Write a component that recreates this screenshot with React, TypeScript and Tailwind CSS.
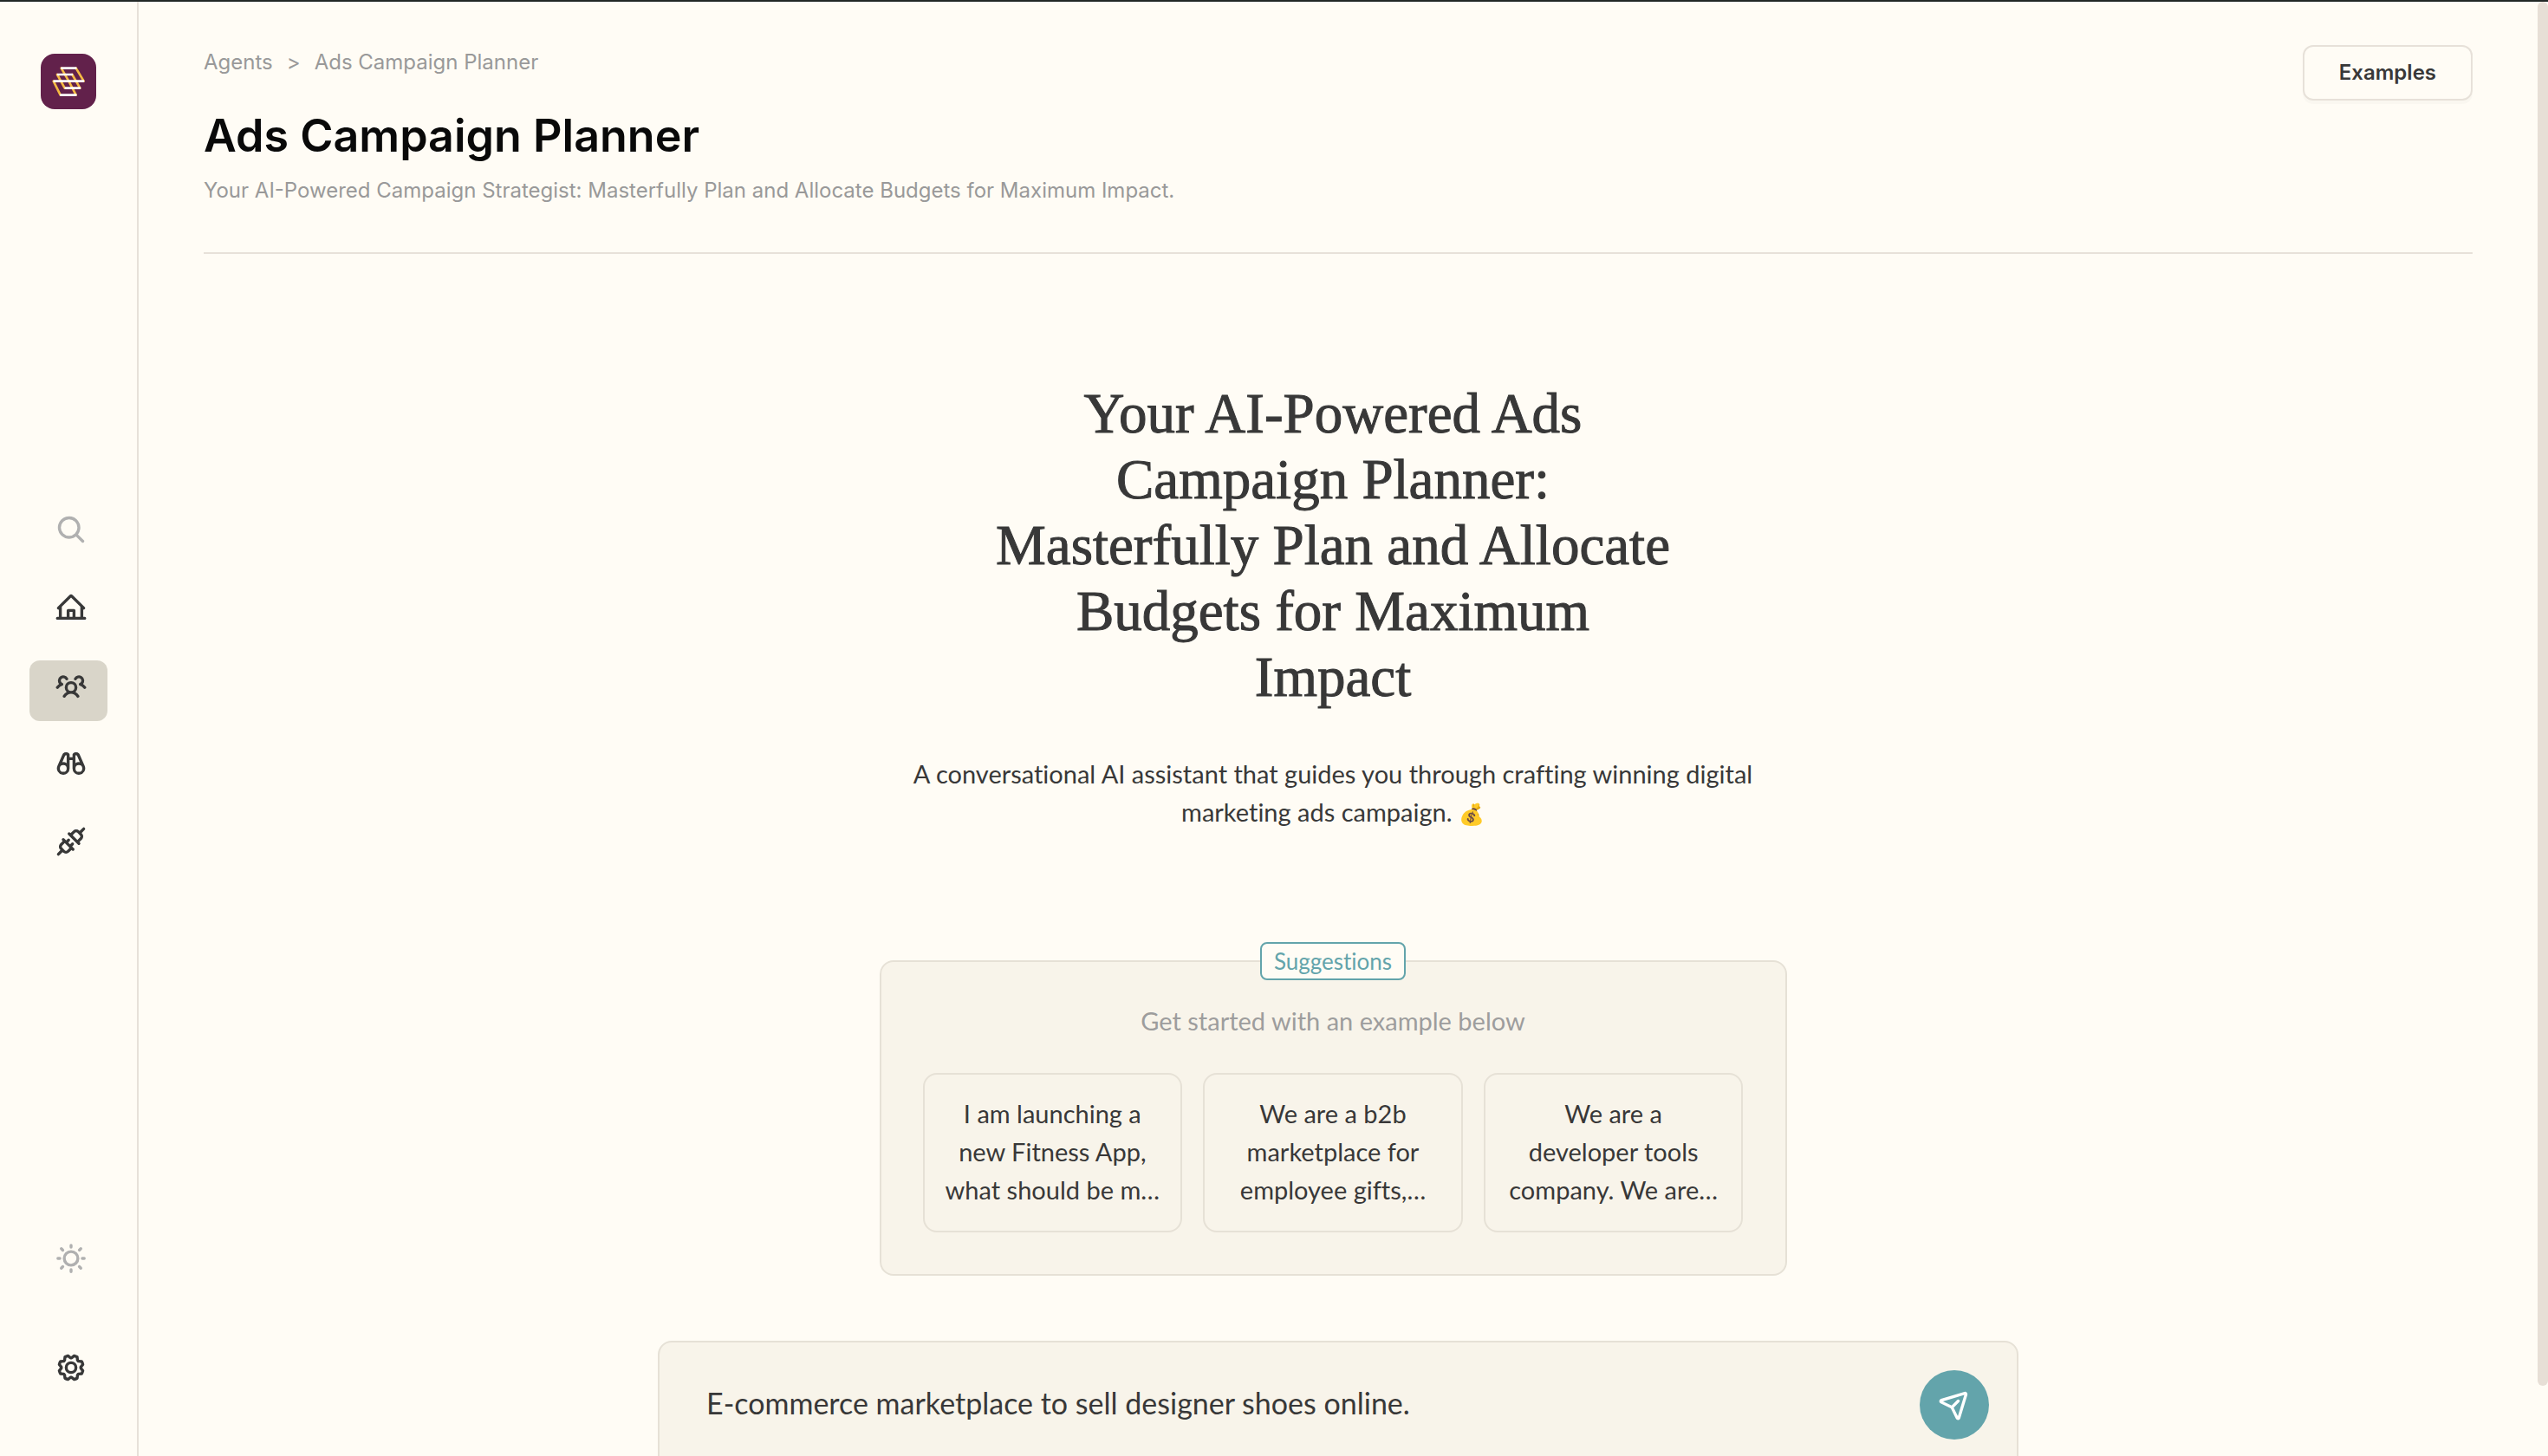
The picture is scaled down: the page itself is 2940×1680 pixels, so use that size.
import {
  PiBinocularsBold,
  PiGearBold,
  PiHouseLineBold,
  PiMagnifyingGlassBold,
  PiPaperPlaneTiltBold,
  PiPlugsBold,
  PiSunBold,
  PiUsersThreeBold,
} from 'react-icons/pi'
import type { IconType } from 'react-icons'

interface NavItem {
  label: string
  icon: IconType
  active?: boolean
  muted?: boolean
}

const NAV_ITEMS: NavItem[] = [
  { label: 'Search', icon: PiMagnifyingGlassBold, muted: true },
  { label: 'Home', icon: PiHouseLineBold },
  { label: 'Agents', icon: PiUsersThreeBold, active: true },
  { label: 'Explore', icon: PiBinocularsBold },
  { label: 'Integrations', icon: PiPlugsBold },
]

const HEADLINE = [
  'Your AI-Powered Ads',
  'Campaign Planner:',
  'Masterfully Plan and Allocate',
  'Budgets for Maximum',
  'Impact',
]

const SUGGESTIONS = [
  'I am launching a\nnew Fitness App,\nwhat should be m…',
  'We are a b2b\nmarketplace for\nemployee gifts,…',
  'We are a\ndeveloper tools\ncompany. We are…',
]

function Logo() {
  return (
    <svg viewBox="51 36 192 192" className="size-16 rounded-2xl bg-[#62214b]" fill="none" strokeWidth="8" strokeLinecap="round">
      <path
        stroke="#f4b942"
        d="M122 86l26 45M173 86l27 45M108 108l26 47M160 108l27 47M95 131l24 48M148 131l25 48"
      />
      <path stroke="#fff" d="M124 86h48M111 108h48M98 131h100M137 155h49M121 179h51" />
    </svg>
  )
}

function NavButton({ label, icon: Icon, active, muted }: NavItem) {
  return (
    <button
      type="button"
      aria-label={label}
      className={`flex h-[70px] w-[90px] items-start rounded-xl pt-[11px] pl-[30px] ${active ? 'bg-[#d9d5c9]' : ''} ${
        muted ? 'text-[#b0b0b0]' : 'text-[#383838]'
      }`}
    >
      <Icon className="size-9" />
    </button>
  )
}

function Sidebar() {
  return (
    <aside className="flex w-40 shrink-0 flex-col items-center border-r-2 border-[#e7e1d9] pt-[60px] pb-[61px]">
      <a href="#" aria-label="Dashboard" className="mb-[45px]">
        <Logo />
      </a>
      <nav className="my-auto flex flex-col gap-5">
        {NAV_ITEMS.map((item) => (
          <NavButton key={item.label} {...item} />
        ))}
      </nav>
      <div className="flex flex-col gap-14">
        <NavButton label="Theme" icon={PiSunBold} muted />
        <NavButton label="Settings" icon={PiGearBold} />
      </div>
    </aside>
  )
}

function PageHeader() {
  return (
    <header className="mx-[75px] flex items-start justify-between border-b-2 border-[#e7e1d9] pt-[50px] pb-[55px]">
      <div className="text-2xl text-[#999]">
        <nav className="flex gap-4 leading-10">
          <a href="#">Agents</a>
          <span>&gt;</span>
          <a href="#">Ads Campaign Planner</a>
        </nav>
        <h1 className="mt-[33px] text-[52px] leading-16 font-semibold text-[#090909]">Ads Campaign Planner</h1>
        <p className="mt-[15px] leading-8">
          Your AI-Powered Campaign Strategist: Masterfully Plan and Allocate Budgets for Maximum Impact.
        </p>
      </div>
      <button
        type="button"
        className="h-16 rounded-xl border-2 border-[#e7e1d9] px-10 text-2xl font-semibold text-[#383838] shadow-[0_4px_0_rgba(0,0,0,0.02)]"
      >
        Examples
      </button>
    </header>
  )
}

function Suggestions() {
  return (
    <section className="mt-[149px] flex w-full flex-col items-center rounded-2xl border-2 border-[#e6e1d6] bg-[#f8f4ea] px-12 pb-12">
      <h3 className="-mt-[23px] flex h-11 items-center rounded-lg border-2 border-[#63a4ab] bg-[#fffcf5] px-[14px] text-[26px] text-[#63a4ab]">
        Suggestions
      </h3>
      <p className="mt-[25px] leading-11 text-[#9d9d9d]">Get started with an example below</p>
      <div className="mt-[38px] grid w-full grid-cols-3 gap-6">
        {SUGGESTIONS.map((text) => (
          <button
            key={text}
            type="button"
            className="rounded-2xl border-2 border-[#e6e1d6] pt-[23px] pb-[25px] leading-11 whitespace-pre"
          >
            {text}
          </button>
        ))}
      </div>
    </section>
  )
}

function Prompt() {
  return (
    <form className="mx-auto mt-[75px] flex w-[1570px] max-w-full shrink-0 items-center rounded-2xl border-2 border-[#e6e1d6] bg-[#f8f4ea] py-8 pr-8 pl-[54px]">
      <input
        aria-label="Prompt"
        defaultValue="E-commerce marketplace to sell designer shoes online."
        className="min-w-0 flex-1 bg-transparent pb-1 text-[34px] leading-11 outline-none"
      />
      <button type="button" aria-label="Send" className="flex size-20 items-center justify-center rounded-full bg-[#63a4ab] text-white">
        <PiPaperPlaneTiltBold className="size-9" />
      </button>
    </form>
  )
}

export default function App() {
  return (
    <div className="flex h-screen overflow-hidden border-t-2 border-[#222826] bg-[#fffcf5] font-['Inter',sans-serif] text-[#383838]">
      <Sidebar />
      <main className="flex min-w-0 flex-1 flex-col overflow-hidden">
        <PageHeader />
        <div className="flex flex-col font-['Lato',sans-serif] text-[29px] [font-variant-ligatures:none]">
          <div className="pr-3">
            <div className="mx-auto flex w-[1047px] max-w-full flex-col items-center pt-[146px] text-center">
              <h2 className="font-['Liberation_Serif',serif] text-[65px] leading-[76px] [-webkit-text-stroke:1px]">
                {HEADLINE.map((line) => (
                  <span key={line} className="block">
                    {line}
                  </span>
                ))}
              </h2>
              <p className="mt-[52px] leading-11">
                A conversational AI assistant that guides you through crafting winning digital
                <br />
                marketing ads campaign. <span className="text-2xl leading-none">💰</span>
              </p>
              <Suggestions />
            </div>
          </div>
          <Prompt />
        </div>
      </main>
      <div className="h-[calc(100%-81px)] w-3 shrink-0 rounded-full bg-[#e7dfd6]" />
    </div>
  )
}
